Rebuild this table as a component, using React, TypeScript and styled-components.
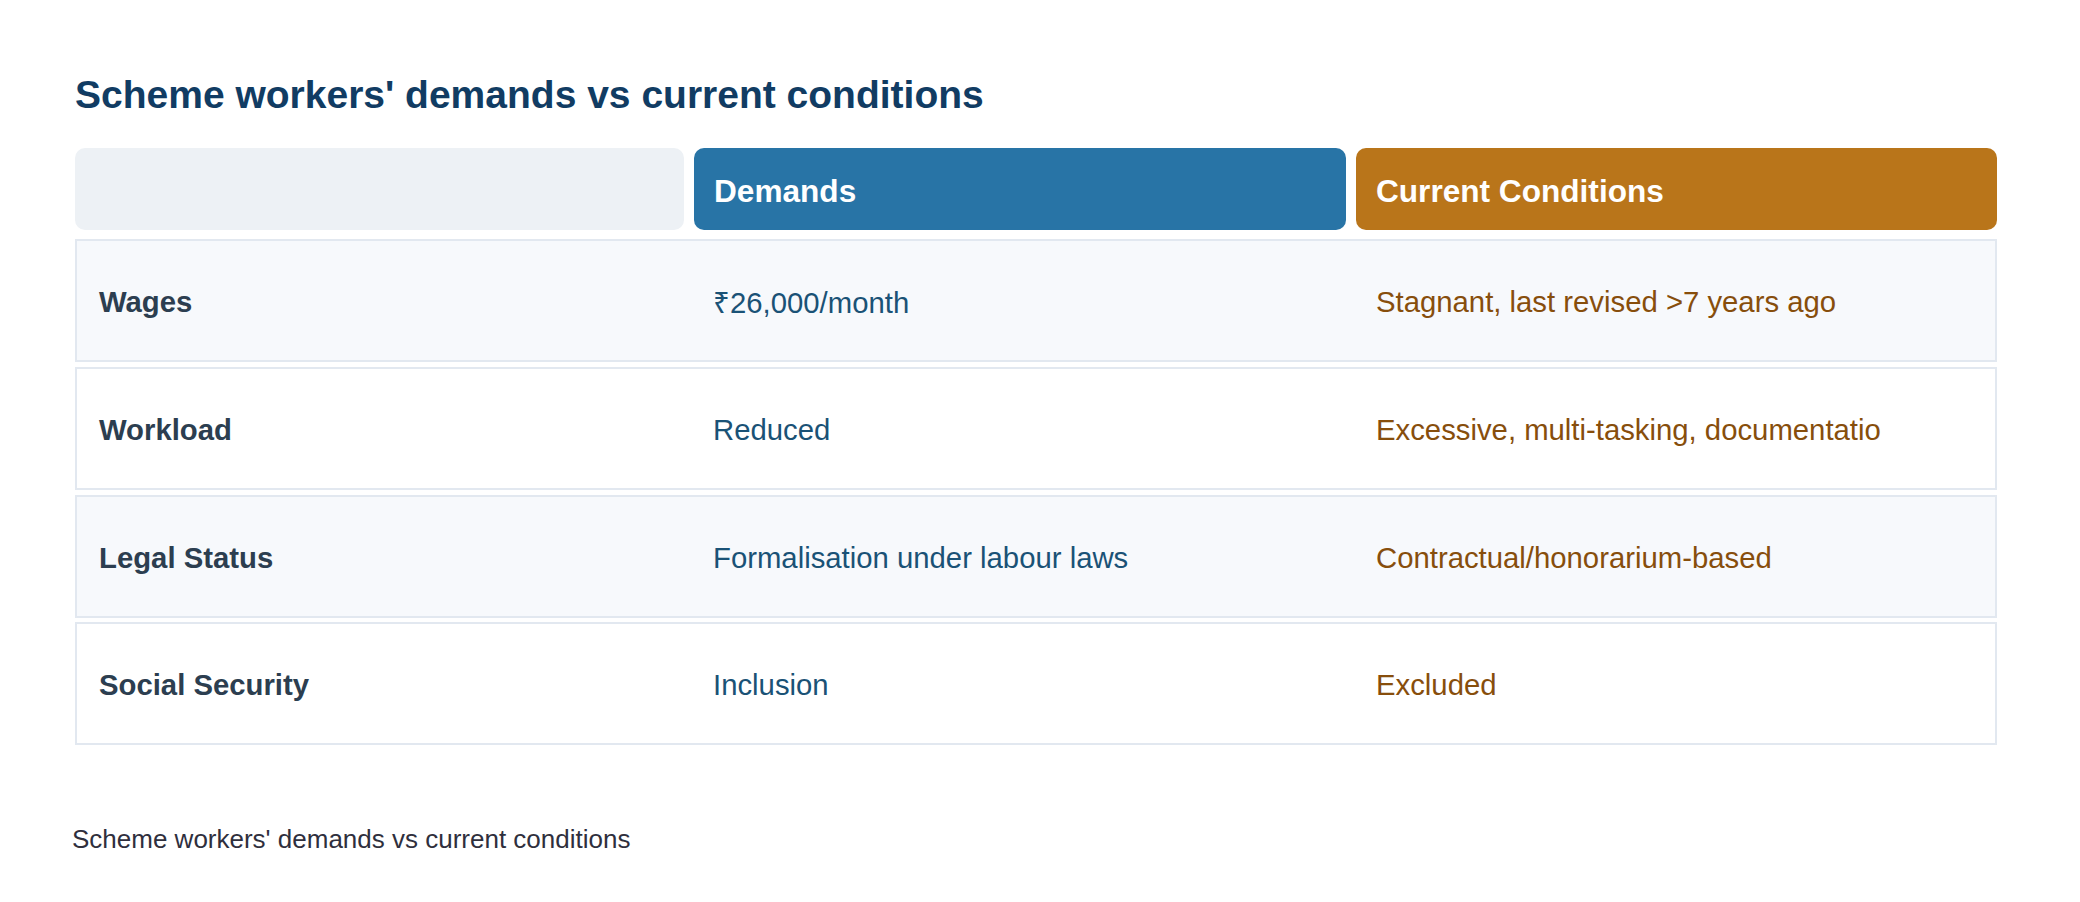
import React from "react";
import styled, { createGlobalStyle } from "styled-components";

const GlobalStyle = createGlobalStyle`
  html, body {
    margin: 0;
    padding: 0;
    background: #ffffff;
  }
  body {
    font-family: "Liberation Sans", Arial, sans-serif;
  }
`;

const Page = styled.div`
  width: 2080px;
  height: 902px;
  box-sizing: border-box;
  padding: 72px 83px 0 75px;
  display: flex;
  flex-direction: column;
`;

const Title = styled.h1`
  margin: 0 0 30px 0;
  font-size: 39px;
  line-height: 46px;
  font-weight: 700;
  color: #113c63;
`;

const Table = styled.div`
  width: 1922px;
  display: flex;
  flex-direction: column;
  gap: 4.8px;
`;

const HeaderRow = styled.div`
  display: grid;
  grid-template-columns: 609px 652px 1fr;
  column-gap: 10px;
  margin-bottom: 4.2px;
`;

const HeaderCell = styled.div<{ $tone: "blank" | "blue" | "amber" }>`
  height: 82px;
  border-radius: 10px;
  box-sizing: border-box;
  padding: 5px 20px 0 20px;
  display: flex;
  align-items: center;
  font-size: 31.6px;
  font-weight: 700;
  color: #ffffff;
  background: ${(p) =>
    p.$tone === "blue" ? "#2874a6" : p.$tone === "amber" ? "#b9751a" : "#edf1f5"};
`;

const Row = styled.div<{ $alt: boolean }>`
  height: 123px;
  box-sizing: border-box;
  border: 2px solid #e2e8f0;
  padding-top: 3px;
  background: ${(p) => (p.$alt ? "#f7f9fc" : "#ffffff")};
  display: grid;
  grid-template-columns: 616px 663px 1fr;
  align-items: center;
`;

const LabelCell = styled.div`
  padding-left: 22px;
  font-size: 29.3px;
  font-weight: 700;
  color: #2c3e50;
  white-space: nowrap;
`;

const ValueCell = styled.div<{ $kind: "demand" | "current" }>`
  padding-left: 20px;
  font-size: 29.3px;
  font-weight: 400;
  color: ${(p) => (p.$kind === "demand" ? "#1a5276" : "#874e0c")};
  white-space: nowrap;
  overflow: hidden;
`;

const Caption = styled.p`
  margin: 79px 0 0 -3px;
  font-size: 26px;
  line-height: 31px;
  color: #2f2f3d;
`;

const rows = [
  { label: "Wages", demand: "₹26,000/month", current: "Stagnant, last revised >7 years ago" },
  { label: "Workload", demand: "Reduced", current: "Excessive, multi-tasking, documentatio" },
  { label: "Legal Status", demand: "Formalisation under labour laws", current: "Contractual/honorarium-based" },
  { label: "Social Security", demand: "Inclusion", current: "Excluded" },
];

export default function App() {
  return (
    <>
      <GlobalStyle />
      <Page>
        <Title>Scheme workers' demands vs current conditions</Title>
        <Table>
          <HeaderRow>
            <HeaderCell $tone="blank" />
            <HeaderCell $tone="blue">Demands</HeaderCell>
            <HeaderCell $tone="amber">Current Conditions</HeaderCell>
          </HeaderRow>
          {rows.map((r, i) => (
            <Row key={r.label} $alt={i % 2 === 0}>
              <LabelCell>{r.label}</LabelCell>
              <ValueCell $kind="demand">{r.demand}</ValueCell>
              <ValueCell $kind="current">{r.current}</ValueCell>
            </Row>
          ))}
        </Table>
        <Caption>Scheme workers' demands vs current conditions</Caption>
      </Page>
    </>
  );
}
